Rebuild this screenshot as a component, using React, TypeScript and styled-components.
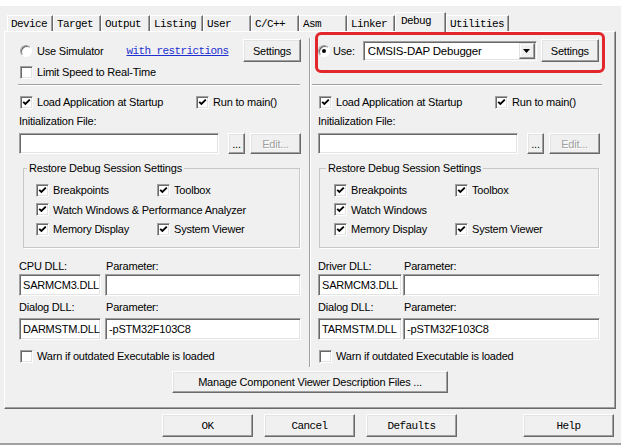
import React from "react";
import styled, { createGlobalStyle } from "styled-components";

const UI_FONT = `"Liberation Sans", Arial, sans-serif`;
const MONO_FONT = `"Liberation Mono", "Courier New", monospace`;

const GlobalStyle = createGlobalStyle`
  html, body {
    margin: 0;
    padding: 0;
    background: #f0f0f0;
  }
  * {
    box-sizing: border-box;
  }
`;

const tabs = [
  { label: "Device", width: 46 },
  { label: "Target", width: 48 },
  { label: "Output", width: 49 },
  { label: "Listing", width: 53 },
  { label: "User", width: 48 },
  { label: "C/C++", width: 48 },
  { label: "Asm", width: 48 },
  { label: "Linker", width: 48 },
  { label: "Debug", width: 51, active: true },
  { label: "Utilities", width: 63 },
];

type SideProps = {
  top: React.ReactNode;
  watchLabel: string;
  dllLabel: string;
  dll: string;
  dialogDll: string;
  dllWidth: number;
  dllGap: number;
  groupLeft: number;
  groupPad: number;
  legendOffset: number;
  sepLeft: number;
  sepRight: number;
};

const CheckMark = () => (
  <svg width="9" height="9" viewBox="0 0 9 9">
    <path d="M1.2 3.8 L3.4 6 L7.8 1.6" fill="none" stroke="#000" strokeWidth="1.9" />
  </svg>
);

const Check = ({ checked, label }: { checked?: boolean; label: string }) => (
  <CheckRow>
    <Box>{checked && <CheckMark />}</Box>
    <Text>{label}</Text>
  </CheckRow>
);

const Side = (p: SideProps) => (
  <>
    <TopSection>{p.top}</TopSection>
    <Separator $left={p.sepLeft} $right={p.sepRight} />

    <LoadRow>
      <Check checked label="Load Application at Startup" />
      <Check checked label="Run to main()" />
    </LoadRow>

    <FieldLabel>Initialization File:</FieldLabel>
    <InitRow>
      <Input $w={200} />
      <Button $w={17} $h={21} style={{ marginLeft: 9 }}>...</Button>
      <Button $w={51} $h={21} $disabled style={{ marginLeft: 5 }}>Edit...</Button>
    </InitRow>

    <Group $left={p.groupLeft} $pad={p.groupPad}>
      <Legend $shift={p.legendOffset - p.groupPad - 2}>Restore Debug Session Settings</Legend>
      <GroupGrid>
        <Check checked label="Breakpoints" />
        <Check checked label="Toolbox" />
        <Wide>
          <Check checked label={p.watchLabel} />
        </Wide>
        <Check checked label="Memory Display" />
        <Check checked label="System Viewer" />
      </GroupGrid>
    </Group>

    <DllGrid $w={p.dllWidth} $gap={p.dllGap}>
      <FieldText>{p.dllLabel}</FieldText>
      <FieldText>Parameter:</FieldText>
      <Input $w={p.dllWidth}>{p.dll}</Input>
      <Input />
      <FieldText>Dialog DLL:</FieldText>
      <FieldText>Parameter:</FieldText>
      <Input $w={p.dllWidth}>{p.dialogDll}</Input>
      <Input>-pSTM32F103C8</Input>
    </DllGrid>

    <WarnRow>
      <Check label="Warn if outdated Executable is loaded" />
    </WarnRow>
  </>
);

const App = () => {
  return (
    <>
      <GlobalStyle />
      <Window>
        <TopStrip />
        <TabStrip>
          {tabs.map((t) => (
            <Tab key={t.label} $width={t.width} $active={t.active}>
              {t.label}
            </Tab>
          ))}
        </TabStrip>

        <Panel>
          <Columns>
            <Column $w={304} $pl={14} $pr={8}>
              <Side
                top={
                  <>
                    <SimRow>
                      <Radio />
                      <Text style={{ marginLeft: 5 }}>Use Simulator</Text>
                      <RestrictLink>with restrictions</RestrictLink>
                      <Button $w={58} $h={23} style={{ marginLeft: "auto" }}>
                        Settings
                      </Button>
                    </SimRow>
                    <LimitRow>
                      <Check label="Limit Speed to Real-Time" />
                    </LimitRow>
                  </>
                }
                watchLabel="Watch Windows & Performance Analyzer"
                dllLabel="CPU DLL:"
                dll="SARMCM3.DLL"
                dialogDll="DARMSTM.DLL"
                dllWidth={82}
                dllGap={4}
                groupLeft={4}
                groupPad={12}
                legendOffset={5}
                sepLeft={-1}
                sepRight={1}
              />
            </Column>

            <Divider />

            <Column $pl={7} $pr={15}>
              <Side
                top={
                  <Highlight>
                    <Radio $on />
                    <Text style={{ marginLeft: 3 }}>Use:</Text>
                    <Select>
                      <SelectText>CMSIS-DAP Debugger</SelectText>
                      <DropButton>
                        <svg width="7" height="4" viewBox="0 0 7 4">
                          <path d="M0 0 H7 L3.5 4 Z" fill="#000" />
                        </svg>
                      </DropButton>
                    </Select>
                    <Button $w={58} $h={23} style={{ marginLeft: 4 }}>
                      Settings
                    </Button>
                  </Highlight>
                }
                watchLabel="Watch Windows"
                dllLabel="Driver DLL:"
                dll="SARMCM3.DLL"
                dialogDll="TARMSTM.DLL"
                dllWidth={84}
                dllGap={1}
                groupLeft={1}
                groupPad={14}
                legendOffset={8}
                sepLeft={-6}
                sepRight={-2}
              />
            </Column>
          </Columns>

          <Button $w={276} $h={22} style={{ alignSelf: "center", marginTop: 4 }}>
            Manage Component Viewer Description Files ...
          </Button>
        </Panel>

        <Footer>
          <Button $w={91} $h={23} $mono>OK</Button>
          <Button $w={91} $h={23} $mono>Cancel</Button>
          <Button $w={91} $h={23} $mono>Defaults</Button>
          <Button $w={91} $h={23} $mono style={{ marginLeft: 55 }}>Help</Button>
        </Footer>
      </Window>
    </>
  );
};

export default App;

const Window = styled.div`
  width: 621px;
  height: 445px;
  display: flex;
  flex-direction: column;
  background: #f0f0f0;
  font-family: ${UI_FONT};
  font-size: 11px;
  letter-spacing: -0.2px;
  color: #000;
  overflow: hidden;
`;

const TopStrip = styled.div`
  height: 6px;
  background: #fff;
`;

const TabStrip = styled.div`
  display: flex;
  align-items: flex-end;
  height: 25px;
  padding-left: 7px;
`;

const Tab = styled.div<{ $width: number; $active?: boolean }>`
  position: relative;
  z-index: ${(p) => (p.$active ? 1 : 0)};
  width: ${(p) => p.$width}px;
  height: ${(p) => (p.$active ? 20 : 16)}px;
  margin-bottom: ${(p) => (p.$active ? -1 : 0)}px;
  padding: ${(p) => (p.$active ? "0 0 4px 5px" : "0 0 0 3px")};
  display: flex;
  align-items: center;
  background: #f0f0f0;
  border-top: 1px solid #fff;
  border-left: 1px solid #fff;
  border-right: 1px solid #696969;
  box-shadow: inset -1px 0 #a0a0a0;
  font-family: ${MONO_FONT};
  font-size: 11px;
  letter-spacing: -0.6px;
  white-space: nowrap;
`;

const Panel = styled.div`
  margin-left: 4px;
  width: 612px;
  height: 378px;
  display: flex;
  flex-direction: column;
  border-top: 1px solid #fff;
  border-left: 1px solid #fff;
  border-right: 1px solid #696969;
  border-bottom: 1px solid #696969;
  box-shadow: inset -1px -1px #a0a0a0;
`;

const Columns = styled.div`
  display: flex;
  height: 335px;
`;

const Column = styled.div<{ $w?: number; $pl: number; $pr: number }>`
  ${(p) => (p.$w ? `width: ${p.$w}px;` : "flex: 1;")}
  display: flex;
  flex-direction: column;
  padding: 0 ${(p) => p.$pr}px 0 ${(p) => p.$pl}px;
`;

const Divider = styled.div`
  width: 2px;
  margin-top: 6px;
  border-left: 1px solid #a0a0a0;
  border-right: 1px solid #fff;
`;

const TopSection = styled.div`
  height: 52px;
  display: flex;
  flex-direction: column;
`;

const SimRow = styled.div`
  display: flex;
  align-items: center;
  height: 23px;
  margin-top: 7px;
  padding-left: 1px;
`;

const RestrictLink = styled.span`
  margin-left: 23px;
  font-family: ${MONO_FONT};
  font-size: 11px;
  letter-spacing: -0.6px;
  color: #1c2fd0;
  text-decoration: underline;
`;

const LimitRow = styled.div`
  margin-top: 3px;
  padding-left: 1px;
`;

const Highlight = styled.div`
  display: flex;
  align-items: center;
  height: 35px;
  margin: 3px -2px 0 0;
  padding: 0 3px 4px 0;
  outline: 3px solid #e3262b;
  border-radius: 3px;
`;

const Select = styled.div`
  width: 174px;
  height: 20px;
  margin-left: 8px;
  display: flex;
  align-items: center;
  background: #fff;
  border: 1px solid;
  border-color: #a0a0a0 #fff #fff #a0a0a0;
  box-shadow: inset 1px 1px #696969, inset -1px -1px #e3e3e3;
  padding: 1px 1px 1px 4px;
`;

const SelectText = styled.span`
  flex: 1;
  font-size: 11.5px;
  white-space: nowrap;
`;

const DropButton = styled.span`
  width: 16px;
  height: 16px;
  display: flex;
  align-items: center;
  justify-content: center;
  background: #f0f0f0;
  border: 1px solid;
  border-color: #e3e3e3 #696969 #696969 #e3e3e3;
  box-shadow: inset -1px -1px #a0a0a0, inset 1px 1px #fff;
`;

const Separator = styled.div<{ $left: number; $right: number }>`
  height: 2px;
  margin: 0 ${(p) => p.$right}px 0 ${(p) => p.$left}px;
  border-top: 1px solid #a0a0a0;
  border-bottom: 1px solid #fff;
`;

const LoadRow = styled.div`
  display: grid;
  grid-template-columns: 176px auto;
  margin-top: 9px;
  padding-left: 1px;
`;

const CheckRow = styled.div`
  display: flex;
  align-items: center;
  gap: 4px;
  height: 14px;
  white-space: nowrap;
`;

const Box = styled.span`
  width: 13px;
  height: 13px;
  flex: none;
  display: inline-flex;
  align-items: center;
  justify-content: center;
  background: #fff;
  border: 1px solid;
  border-color: #a0a0a0 #fff #fff #a0a0a0;
  box-shadow: inset 1px 1px #696969, inset -1px -1px #e3e3e3;
`;

const Radio = styled.span<{ $on?: boolean }>`
  width: 12px;
  height: 12px;
  flex: none;
  border-radius: 50%;
  display: inline-flex;
  align-items: center;
  justify-content: center;
  background: #fff;
  border: 1px solid;
  border-color: #a0a0a0 #fff #fff #a0a0a0;
  box-shadow: inset 1px 1px #696969;

  &::after {
    content: "";
    width: 4px;
    height: 4px;
    border-radius: 50%;
    background: ${(p) => (p.$on ? "#000" : "transparent")};
  }
`;

const Text = styled.span`
  line-height: 14px;
  white-space: nowrap;
`;

const FieldLabel = styled.div`
  margin-top: 5px;
  height: 14px;
  line-height: 14px;
`;

const FieldText = styled.div`
  line-height: 14px;
  white-space: nowrap;
`;

const InitRow = styled.div`
  display: flex;
  margin-top: 5px;
  height: 21px;
`;

const Input = styled.div<{ $w?: number }>`
  ${(p) => (p.$w ? `width: ${p.$w}px;` : "")}
  height: 100%;
  display: flex;
  align-items: center;
  padding: 0 1px 0 3px;
  background: #fff;
  border: 1px solid;
  border-color: #a0a0a0 #fff #fff #a0a0a0;
  box-shadow: inset 1px 1px #696969, inset -1px -1px #e3e3e3;
  white-space: nowrap;
  overflow: hidden;
  line-height: 14px;
`;

const Button = styled.button<{ $w: number; $h: number; $mono?: boolean; $disabled?: boolean }>`
  width: ${(p) => p.$w}px;
  height: ${(p) => p.$h}px;
  flex: none;
  padding: 0;
  background: #f0f0f0;
  border: 1px solid;
  border-color: #fff #696969 #696969 #fff;
  box-shadow: inset -1px -1px #a0a0a0, inset 1px 1px #e3e3e3;
  font-family: ${(p) => (p.$mono ? MONO_FONT : UI_FONT)};
  font-size: 11px;
  letter-spacing: ${(p) => (p.$mono ? "-0.6px" : "-0.2px")};
  color: ${(p) => (p.$disabled ? "#a0a0a0" : "#000")};
  text-shadow: ${(p) => (p.$disabled ? "1px 1px #fff" : "none")};
  white-space: nowrap;
`;

const Group = styled.fieldset<{ $left: number; $pad: number }>`
  margin: 7px 1px 0 ${(p) => p.$left}px;
  padding: 8px 0 11px ${(p) => p.$pad}px;
  border: 1px solid #c8c8c8;
  box-shadow: 1px 1px #fff;
  min-width: 0;
`;

const Legend = styled.legend<{ $shift: number }>`
  margin-left: ${(p) => p.$shift}px;
  padding: 0 2px;
  line-height: 14px;
  font-size: 11px;
`;

const GroupGrid = styled.div`
  display: grid;
  grid-template-columns: 121px auto;
  row-gap: 5.5px;
`;

const Wide = styled.div`
  grid-column: 1 / span 2;
`;

const DllGrid = styled.div<{ $w: number; $gap: number }>`
  display: grid;
  grid-template-columns: ${(p) => p.$w}px 1fr;
  grid-template-rows: 17px 22px 22px 22px;
  column-gap: ${(p) => p.$gap}px;
  align-items: center;
  margin-top: 9px;

  & > div:nth-child(2),
  & > div:nth-child(6) {
    padding-left: 1px;
  }
`;

const WarnRow = styled.div`
  margin-top: 9px;
  padding-left: 1px;
`;

const Footer = styled.div`
  height: 36px;
  display: flex;
  justify-content: flex-end;
  align-items: flex-start;
  gap: 11px;
  padding: 5px 7px 0 0;
  border-bottom: 2px solid #a0a0a0;
`;
